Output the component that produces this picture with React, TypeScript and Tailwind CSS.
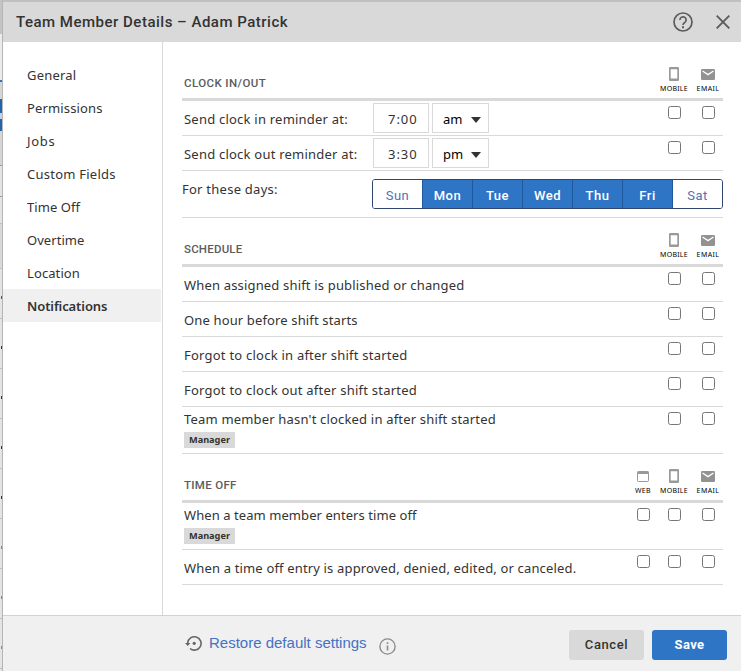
import type { ReactNode } from 'react';

const sidebarItems = [
  { label: 'General', cls: 'tracking-[0.2px]' },
  { label: 'Permissions', cls: 'tracking-[0.15px]' },
  { label: 'Jobs', cls: 'tracking-[0.7px]' },
  { label: 'Custom Fields', cls: 'tracking-[0.24px]' },
  { label: 'Time Off', cls: 'tracking-[0.05px]' },
  { label: 'Overtime', cls: 'tracking-[0.05px]' },
  { label: 'Location', cls: 'tracking-[0.1px]' },
  { label: 'Notifications', cls: 'tracking-[-0.1px] font-semibold bg-[#f0f0f0]' },
];

const days = [
  { label: 'Sun', on: false },
  { label: 'Mon', on: true },
  { label: 'Tue', on: true },
  { label: 'Wed', on: true },
  { label: 'Thu', on: true },
  { label: 'Fri', on: true },
  { label: 'Sat', on: false },
];

function MobileIcon() {
  return (
    <svg width="10" height="15" viewBox="0 0 10 15" fill="none">
      <path d="M1.300 0h7.400A1.300 1.300 0 0 1 10 1.300v11.400A1.300 1.300 0 0 1 8.700 14h-7.400A1.300 1.300 0 0 1 0 12.700v-11.400A1.300 1.300 0 0 1 1.300 0ZM1.700 2.300v9.200h6.600v-9.200Z" fill="#999" fillRule="evenodd" />
    </svg>
  );
}

function EmailIcon() {
  return (
    <svg width="14" height="11" viewBox="0 0 14 11" fill="none">
      <rect width="14" height="11" rx="1.3" fill="#929292" />
      <path d="M1.500 2 7 5.600 12.500 2" stroke="#fff" strokeWidth="1.300" />
    </svg>
  );
}

function WebIcon() {
  return (
    <svg width="12" height="11" viewBox="0 0 12 11" fill="none">
      <rect x="0.500" y="0.500" width="11" height="10" rx="1" stroke="#999" />
      <path d="M0.500 0.500h11v2.500h-11Z" fill="#999" />
    </svg>
  );
}

function Check({ cls }: { cls: string }) {
  return (
    <div className={cls}>
      <input type="checkbox" className="block h-[13px] w-[13px] appearance-none rounded-[2.5px] border border-[#767676] bg-white" />
    </div>
  );
}

function Checks({ web }: { web?: boolean }) {
  return (
    <div className="ml-auto flex shrink-0 pt-[5px]">
      {web && <Check cls="w-[24px] pl-[6px]" />}
      <Check cls="w-[38px] pl-[13px]" />
      <Check cls="w-[30px] pl-[9px]" />
    </div>
  );
}

function Column({ icon, label, cls }: { icon: ReactNode; label: string; cls: string }) {
  return (
    <div className={`flex flex-col items-center ${cls}`}>
      <div className="flex h-[15px] items-center">{icon}</div>
      <span className="mt-[3px] whitespace-nowrap text-[7px] leading-[8px] text-black">{label}</span>
    </div>
  );
}

function SectionHeader({ title, web, cls }: { title: string; web?: boolean; cls: string }) {
  return (
    <div className="flex h-[49px] border-b-[3px] border-[#d9d9d9] pl-[2px]">
      <h2 className={`pt-[23px] font-[Roboto,sans-serif] text-[11.500px] font-medium leading-[16px] text-[#5c5c5c] ${cls}`}>{title}</h2>
      <div className="ml-auto flex pt-[15px]">
        {web && <Column icon={<WebIcon />} label="WEB" cls="w-[24px] tracking-[0.3px]" />}
        <Column icon={<MobileIcon />} label="MOBILE" cls="w-[38px] tracking-[0.25px]" />
        <Column icon={<EmailIcon />} label="EMAIL" cls="w-[30px] tracking-[0.4px]" />
      </div>
    </div>
  );
}

function Row({ text, cls, web }: { text: string; cls: string; web?: boolean }) {
  return (
    <div className="flex h-[35px] border-b border-[#d9d9d9] pl-[2px]">
      <span className={`whitespace-nowrap pt-[9px] leading-[18px] ${cls}`}>{text}</span>
      <Checks web={web} />
    </div>
  );
}

function ManagerRow({ text, cls, web }: { text: string; cls: string; web?: boolean }) {
  return (
    <div className="flex h-[47px] border-b border-[#d9d9d9] pl-[2px]">
      <div className="flex flex-col items-start pt-[3px]">
        <span className={`whitespace-nowrap leading-[18px] ${cls}`}>{text}</span>
        <span className="mt-[4px] h-[16px] w-[51px] bg-[#d9d9d9] text-center text-[9.200px] font-bold leading-[15px]">Manager</span>
      </div>
      <Checks web={web} />
    </div>
  );
}

function TimeRow({ text, time, half, cls }: { text: string; time: string; half: string; cls: string }) {
  return (
    <div className="flex h-[35px] border-b border-[#d9d9d9] pl-[2px]">
      <span className={`w-[189px] whitespace-nowrap pt-[9px] leading-[18px] ${cls}`}>{text}</span>
      <div className="mt-[2px] h-[30px] w-[56px] border border-[#d9d9d9] pl-[14px] pt-[6px] text-[13px] leading-[18px] tracking-[0.95px]">{time}</div>
      <div className="ml-[3px] mt-[2px] flex h-[30px] w-[57px] border border-[#d9d9d9] pl-[10px] pt-[6px] text-[13px] leading-[18px] text-black">
        <span className="w-[28px]">{half}</span>
        <svg className="mt-[7px]" width="10" height="6" viewBox="0 0 10 6">
          <path d="M0 0h10L5 6Z" fill="#333" />
        </svg>
      </div>
      <Checks />
    </div>
  );
}

/* Slice of the page that stays visible behind the left edge of the dialog. */
function Backdrop() {
  return (
    <div className="flex w-[3px] shrink-0 flex-col border-r border-[#b5b5b5] bg-[#e4e4e4]">
      <div className="h-[34px] shrink-0 bg-[#c4c4c4]" />
      <div className="h-[46px] shrink-0 bg-[#ebebeb]" />
      <div className="h-[2px] shrink-0 bg-[#2f76c6]" />
      <div className="h-[17px] shrink-0 bg-[#d5d5d5]" />
      <div className="h-[32px] shrink-0 bg-[#2265ae] pt-[14px]">
        <div className="h-[6px] bg-[#c8cfe4]" />
      </div>
      <div className="h-[35px] shrink-0 border-b border-[#999] bg-[#d5d5d5]" />
      <div className="h-[31px] shrink-0 border-b border-[#999]" />
      <div className="h-[27px] shrink-0 border-b border-[#c0c0c0]" />
      <div className="h-[45px] shrink-0 border-b border-[#c0c0c0] bg-[#d9d9d9]" />
      {['bg-[#555]', 'bg-[#333]', 'bg-[#333]', 'bg-[#333]', 'bg-[#333]', 'bg-[#b8735c]', 'bg-[#b8735c]', 'bg-[#a8866f]'].map((c, i) => (
        <div key={i} className="flex h-[50px] shrink-0 items-center justify-end border-b border-[#c0c0c0] pt-[8px]">
          <div className={`h-[3px] w-px ${c}`} />
        </div>
      ))}
    </div>
  );
}

export default function App() {
  return (
    <div className="flex h-[671px] w-[741px] overflow-hidden bg-white font-['Noto_Sans',sans-serif] text-[13px] text-[#333]">
      <Backdrop />
      <div className="flex min-w-0 flex-1 flex-col">
        <header className="flex h-[42px] shrink-0 items-center border-t-2 border-[#c0c0c0] bg-[#d9d9d9] pl-[13px]">
          <h1 className="whitespace-nowrap font-[Roboto,sans-serif] text-[15px] font-medium leading-[20px] tracking-[0.5px]">Team Member Details – Adam Patrick</h1>
          <svg className="ml-auto" width="20" height="20" viewBox="0 0 20 20" fill="none">
            <circle cx="10" cy="10" r="9" stroke="#5c5c5c" strokeWidth="1.700" />
            <path d="M6.900 7.900a3.100 3.100 0 1 1 5.400 2.100C11.300 11 10 11.400 10 13" stroke="#5c5c5c" strokeWidth="1.700" />
            <path d="M9 14.200h2v2H9Z" fill="#5c5c5c" />
          </svg>
          <svg className="ml-[23px] mr-[11px]" width="14" height="14" viewBox="0 0 14 14">
            <path d="m0.700 0.700 12.600 12.600M13.300 0.700 0.700 13.300" stroke="#5c5c5c" strokeWidth="1.900" />
          </svg>
        </header>
        <div className="flex min-h-0 flex-1">
          <nav className="w-[160px] shrink-0 border-r border-[#d9d9d9] pt-[16px]">
            {sidebarItems.map((item) => (
              <div key={item.label} className={`mr-px h-[33px] pl-[24px] pt-px leading-[32px] ${item.cls}`}>{item.label}</div>
            ))}
          </nav>
          <main className="ml-[19px] w-[541px] shrink-0 pt-[10px]">
            <SectionHeader title="CLOCK IN/OUT" cls="tracking-[0.4px]" />
            <TimeRow text="Send clock in reminder at:" time="7:00" half="am" cls="tracking-[0.22px]" />
            <TimeRow text="Send clock out reminder at:" time="3:30" half="pm" cls="tracking-[0.22px]" />
            <div className="flex h-[47px] border-b border-[#d9d9d9]">
              <span className="w-[190px] pt-[9px] leading-[18px] tracking-[0.25px]">For these days:</span>
              <div className="mt-[8px] flex h-[30px] w-[351px] overflow-hidden rounded-[3px] border border-[#30466c]">
                {days.map((d, i) => (
                  <div
                    key={d.label}
                    className={`flex-1 pt-px text-center font-[Roboto,sans-serif] leading-[30px] tracking-[0.5px] ${i > 0 ? 'border-l border-[#1f599c]' : ''} ${d.on ? 'bg-[#2e75c6] font-medium text-white' : 'bg-white text-[#556fb5]'}`}
                  >
                    {d.label}
                  </div>
                ))}
              </div>
            </div>
            <SectionHeader title="SCHEDULE" cls="tracking-[0.2px]" />
            <Row text="When assigned shift is published or changed" cls="tracking-[0.17px]" />
            <Row text="One hour before shift starts" cls="tracking-[0.14px]" />
            <Row text="Forgot to clock in after shift started" cls="tracking-[0.23px]" />
            <Row text="Forgot to clock out after shift started" cls="tracking-[0.23px]" />
            <ManagerRow text="Team member hasn't clocked in after shift started" cls="tracking-[0.18px]" />
            <SectionHeader title="TIME OFF" web cls="tracking-[0.3px]" />
            <ManagerRow text="When a team member enters time off" web cls="tracking-[0.07px]" />
            <Row text="When a time off entry is approved, denied, edited, or canceled." web cls="tracking-[0.16px]" />
          </main>
        </div>
        <footer className="flex h-[56px] shrink-0 border-t border-[#d0d3d3] bg-[#f0f0f0] pl-[182px]">
          <svg className="mt-[19px]" width="17" height="17" viewBox="0 0 17 17" fill="none">
            <path d="M2.700 8A6.700 6.700 0 1 1 5 13.500" stroke="#666" strokeWidth="1.600" />
            <path d="M0 8h5.400L2.700 10.900Z" fill="#666" />
            <circle cx="9.200" cy="8.300" r="1.600" fill="#666" />
          </svg>
          <a className="ml-[7px] mt-[17px] w-[158px] whitespace-nowrap font-['Liberation_Sans',Arial,sans-serif] text-[15px] leading-[20px] text-[#4472c4]">Restore default settings</a>
          <svg className="ml-[12px] mt-[22px]" width="17" height="17" viewBox="0 0 17 17" fill="none">
            <circle cx="8.500" cy="8.500" r="7.600" stroke="#8c8c8c" strokeWidth="1.400" />
            <path d="M8.500 7.500v5M8.500 4.300v1.800" stroke="#8c8c8c" strokeWidth="1.600" />
          </svg>
          <div className="ml-auto mr-[14px] mt-[14px] flex gap-[8px] font-[Roboto,sans-serif]">
            <button className="h-[30px] w-[75px] rounded-[3px] bg-[#d9d9d9] text-[13px] font-medium tracking-[0.6px]">Cancel</button>
            <button className="h-[30px] w-[75px] rounded-[3px] bg-[#2e75c6] text-[13px] font-bold tracking-[0.4px] text-white">Save</button>
          </div>
        </footer>
      </div>
    </div>
  );
}
